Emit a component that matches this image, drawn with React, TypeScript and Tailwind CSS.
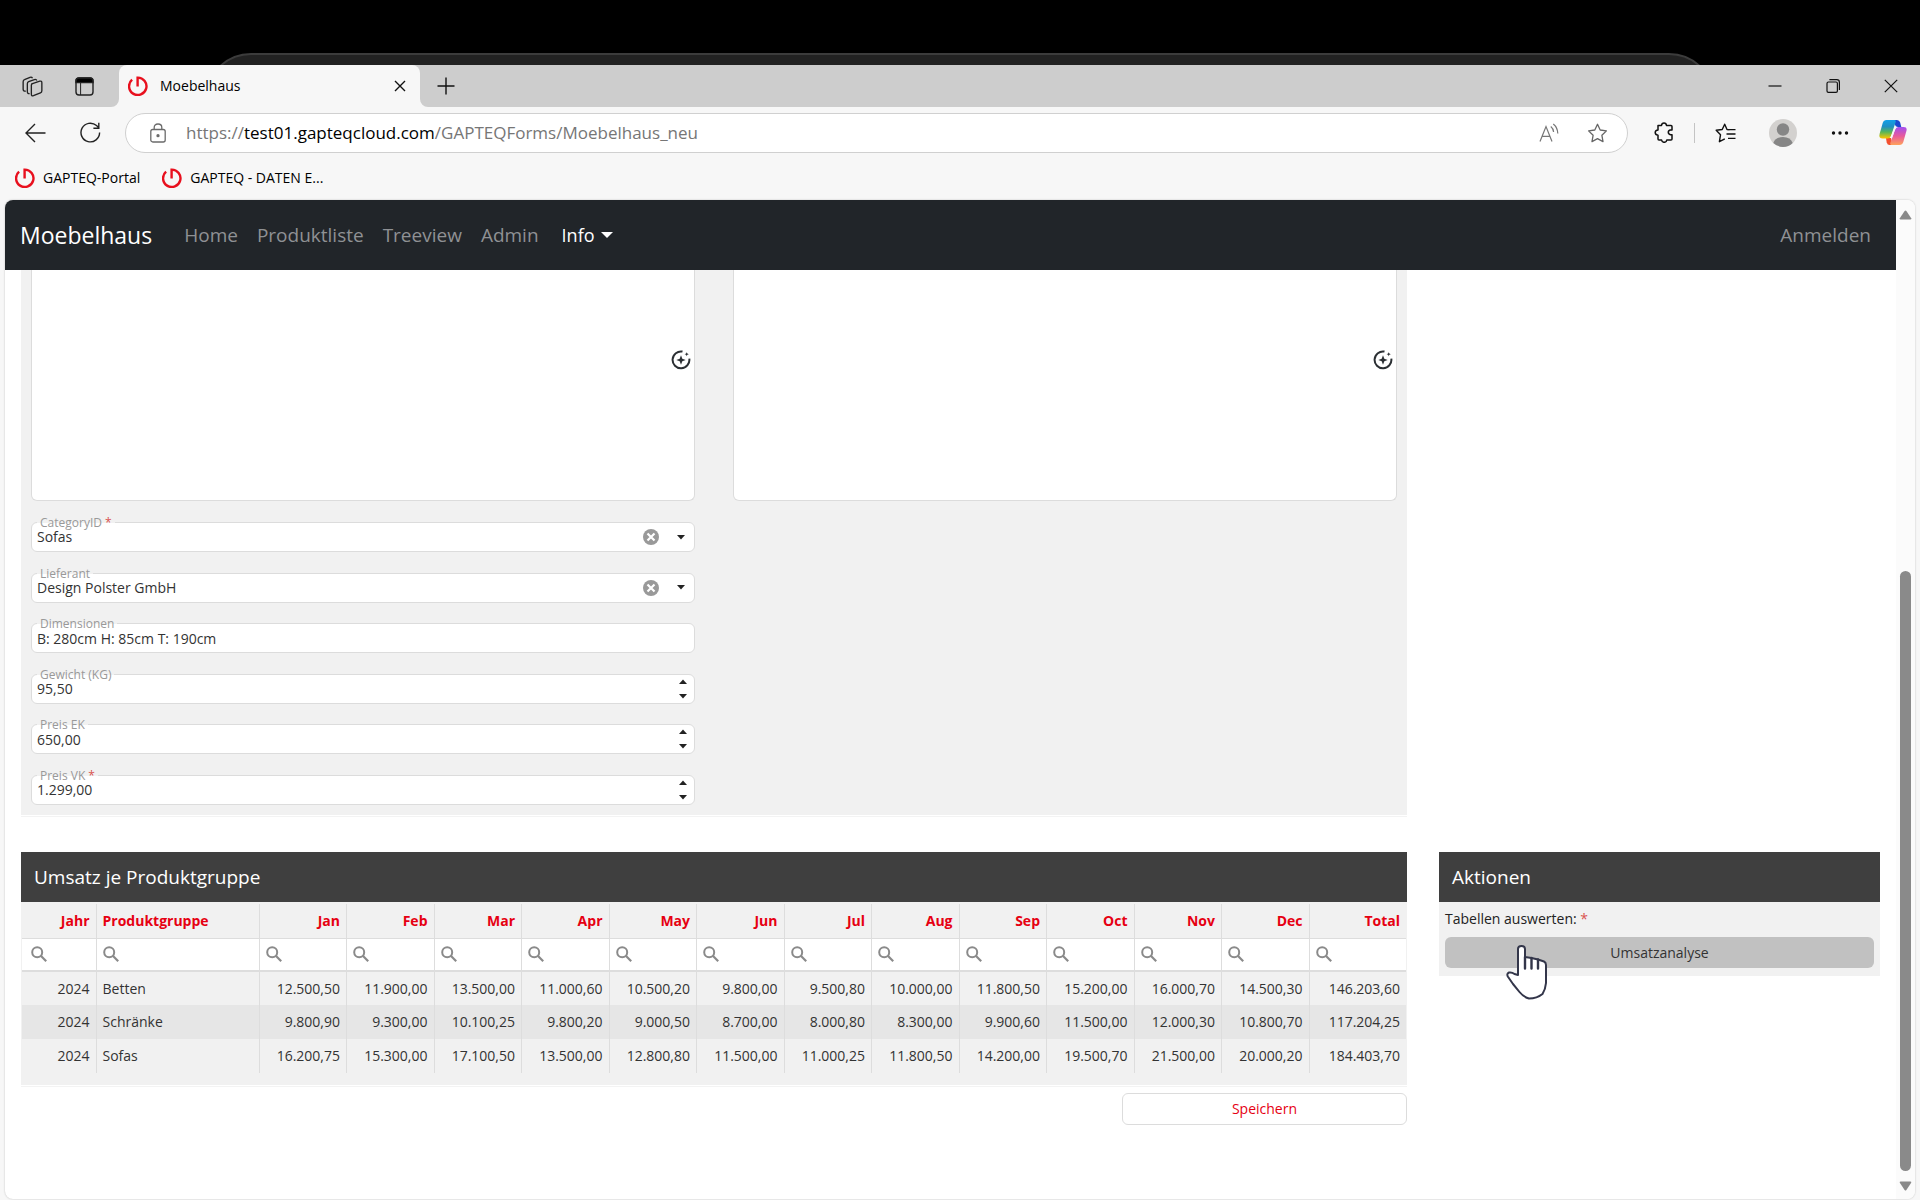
import { useState } from "react";
import type { ReactNode } from "react";

const months = [
  "Jan",
  "Feb",
  "Mar",
  "Apr",
  "May",
  "Jun",
  "Jul",
  "Aug",
  "Sep",
  "Oct",
  "Nov",
  "Dec",
];

const columns = ["Jahr", "Produktgruppe", ...months, "Total"];

const sales = [
  ["2024", "Betten", "12.500,50", "11.900,00", "13.500,00", "11.000,60", "10.500,20", "9.800,00", "9.500,80", "10.000,00", "11.800,50", "15.200,00", "16.000,70", "14.500,30", "146.203,60"],
  ["2024", "Schränke", "9.800,90", "9.300,00", "10.100,25", "9.800,20", "9.000,50", "8.700,00", "8.000,80", "8.300,00", "9.900,60", "11.500,00", "12.000,30", "10.800,70", "117.204,25"],
  ["2024", "Sofas", "16.200,75", "15.300,00", "17.100,50", "13.500,00", "12.800,80", "11.500,00", "11.000,25", "11.800,50", "14.200,00", "19.500,70", "21.500,00", "20.000,20", "184.403,70"],
];

function GapteqLogo() {
  return (
    <svg width="20" height="20" viewBox="0 0 20 20" fill="none" stroke="#e8101e" strokeWidth="2.4" aria-hidden="true">
      <path d="M9.6 10.5V1.6A8.7 8.7 0 1 1 4.1 3.7" />
    </svg>
  );
}

function TabFlare({ flip = false }: { flip?: boolean }) {
  return (
    <svg width="8" height="8" viewBox="0 0 8 8" fill="#f7f7f7" aria-hidden="true">
      <path d={flip ? "M0 0A8 8 0 0 0 8 8H0Z" : "M8 0A8 8 0 0 1 0 8H8Z"} />
    </svg>
  );
}

function TabStrip() {
  return (
    <div className="flex h-[42px] items-stretch bg-[#cdcdcd]">
      <div className="flex w-[111px] items-center gap-8 pl-[22px]">
        <button aria-label="Arbeitsbereiche">
          <svg width="21" height="21" viewBox="0 0 22 22" fill="none" stroke="#222" strokeWidth="1.4" strokeLinejoin="round" aria-hidden="true">
            <path d="M10.2 8.2 18.6 5.4Q20.8 4.9 20.8 7V15.4Q20.8 17 19.3 17.6L12 20.6Q9.8 21.3 9.8 19.2V9.6Q9.8 8.5 10.9 8Z" />
            <path d="M8 18.4Q5.8 18.8 5.6 16.8V8.2Q5.6 6.6 7 6L13 3.7Q15 3.2 15.6 4.8" />
            <path d="M4 15.8Q1.4 16.2 1.2 14V6Q1.2 4.4 2.6 3.9L8.4 1.4Q10.2.8 11 2.4" />
          </svg>
        </button>
        <button aria-label="Tabaktionen">
          <svg width="19" height="19" viewBox="0 0 19 19" fill="none" stroke="#222" strokeWidth="1.4" aria-hidden="true">
            <rect x="1" y="1" width="17" height="17" rx="3" />
            <path d="M1 4Q1 1 4 1H15Q18 1 18 4V5.6H1Z" fill="#000" />
            <path d="M5.6 5.6V18" strokeWidth="1" />
          </svg>
        </button>
      </div>
      <div className="flex items-end">
        <TabFlare />
        <div className="flex h-full w-[301px] items-center rounded-t-lg bg-[#f7f7f7] pl-[9px] pr-[14px]">
          <GapteqLogo />
          <span className="ml-3 flex-1 text-sm">Moebelhaus</span>
          <button aria-label="Tab schließen">
            <svg width="12" height="12" viewBox="0 0 12 12" stroke="#111" strokeWidth="1.4" aria-hidden="true">
              <path d="M1 1 11 11M11 1 1 11" />
            </svg>
          </button>
        </div>
        <TabFlare flip />
      </div>
      <button aria-label="Neuer Tab" className="ml-[9px]">
        <svg width="18" height="18" viewBox="0 0 18 18" stroke="#111" strokeWidth="1.4" aria-hidden="true">
          <path d="M9 .5V17.5M.5 9H17.5" />
        </svg>
      </button>
      <div className="ml-auto flex items-center gap-11 pr-[22px]">
        <button aria-label="Minimieren">
          <svg width="14" height="14" viewBox="0 0 14 14" stroke="#111" strokeWidth="1.2" aria-hidden="true">
            <path d="M.5 7H13.5" />
          </svg>
        </button>
        <button aria-label="Verkleinern">
          <svg width="14" height="14" viewBox="0 0 14 14" fill="none" stroke="#111" strokeWidth="1.2" aria-hidden="true">
            <rect x="1" y="3" width="10.4" height="10.4" rx="1.4" />
            <path d="M3.4.7H10.8Q13.4.7 13.4 3.4V11" />
          </svg>
        </button>
        <button aria-label="Schließen">
          <svg width="14" height="14" viewBox="0 0 14 14" stroke="#111" strokeWidth="1.2" aria-hidden="true">
            <path d="M.8.8 13.2 13.2M13.2.8.8 13.2" />
          </svg>
        </button>
      </div>
    </div>
  );
}

function CopilotIcon() {
  return (
    <svg width="28" height="27" viewBox="0 0 28 27" aria-hidden="true">
      <defs>
        <linearGradient id="cpLeft" x1="0" y1="0" x2="0" y2="1">
          <stop offset="0" stopColor="#12a0e8" />
          <stop offset=".35" stopColor="#1f8fc4" />
          <stop offset=".65" stopColor="#57b659" />
          <stop offset="1" stopColor="#ffc600" />
        </linearGradient>
        <linearGradient id="cpRight" x1="0" y1="0" x2="0" y2="1">
          <stop offset="0" stopColor="#a24ff0" />
          <stop offset=".5" stopColor="#e85a9c" />
          <stop offset="1" stopColor="#ffa25a" />
        </linearGradient>
      </defs>
      <path d="M14 1H18Q20.400 1 21.200 3.500L22.300 8H19Q16.500 8 15.700 5Z" fill="#1b49cf" />
      <path d="M7 19H12L13.500 26H10.500Q8.400 26 7.700 23.500Z" fill="#f4502e" />
      <path d="M7.500 1H15.500Q17.300 1 16.500 3.600L12 17Q11.100 19.500 8.500 19.500H3.500Q-.5 19.500.6 15L3.700 4Q4.600 1 7.500 1Z" fill="url(#cpLeft)" />
      <path d="M20.500 26H12.500Q10.700 26 11.500 23.400L16 10.500Q16.900 8 19.500 8H24.500Q28.500 8 27.400 12L24.300 23Q23.400 26 20.500 26Z" fill="url(#cpRight)" />
      <path d="M15.600 8.600H18Q16.700 9 16 11L13.200 18.700H10.800Q11.800 18 12.300 16.400Z" fill="#f7f7f7" />
    </svg>
  );
}

const starPath = "M10.500 1.300 13.200 7 19.400 7.900 14.900 12.300 16 18.600 10.500 15.600 5 18.600 6.100 12.300 1.600 7.900 7.800 7Z";

function AddressRow() {
  return (
    <div className="flex h-[51px] items-center">
      <div className="flex w-[125px] items-center gap-[34px] pl-[25px]">
        <button aria-label="Zurück">
          <svg width="21" height="20" viewBox="0 0 21 20" fill="none" stroke="#222" strokeWidth="1.4" aria-hidden="true">
            <path d="M20.500 10H1M10 1 1 10 10 19" />
          </svg>
        </button>
        <button aria-label="Aktualisieren">
          <svg width="21" height="21" viewBox="0 0 21 21" fill="none" stroke="#222" strokeWidth="1.4" aria-hidden="true">
            <path d="M19.600 10.500A9.300 9.300 0 1 1 16.500 3.600L18.600 5.600M18.800.8V6.200H13.400" />
          </svg>
        </button>
      </div>
      <div className="flex h-10 flex-1 items-center rounded-full border border-[#d0d0d0] bg-white pl-6 pr-[19px]">
        <svg width="16" height="20" viewBox="0 0 16 20" fill="none" stroke="#6b6b6b" strokeWidth="1.300" aria-hidden="true">
          <rect x=".8" y="6.500" width="14.400" height="12.500" rx="2" />
          <path d="M4.200 6.500V4.500Q4.200 1 8 1T11.800 4.500V6.500" />
          <circle cx="8" cy="12.700" r="1" fill="#555" />
        </svg>
        <a href="#" className="ml-5 flex-1 text-[17px] text-[#767676]">
          https://<span className="text-black">test01.gapteqcloud.com</span>
          /GAPTEQForms/Moebelhaus_neu
        </a>
        <button aria-label="Laut vorlesen">
          <svg width="20" height="20" viewBox="0 0 20 20" fill="none" stroke="#777" strokeWidth="1.200" aria-hidden="true">
            <path d="M1 18.500 7 3.500 13 18.500M3 13.300H11M11.800 3.500Q14.300 5.500 14.600 9M14.300 1Q18.600 4.500 18.800 10.500" />
          </svg>
        </button>
        <button aria-label="Favorit hinzufügen" className="ml-7">
          <svg width="21" height="20" viewBox="0 0 21 20" fill="none" stroke="#666" strokeWidth="1.300" strokeLinejoin="round" aria-hidden="true">
            <path d={starPath} />
          </svg>
        </button>
      </div>
      <div className="flex items-center pl-[26px] pr-[13px]">
        <button aria-label="Erweiterungen">
          <svg width="20" height="21" viewBox="0 0 20 21" fill="none" stroke="#111" strokeWidth="1.500" strokeLinejoin="round" aria-hidden="true">
            <path d="M4 3.500H7.500Q7.800 1 10 1T12.500 3.500H17Q18 3.500 18 4.500V8H16.500Q14.300 8.300 14.300 10.300T16.500 12.700H18V17Q18 18 17 18H12.800Q12.500 20.300 10.200 20.300T7.600 18H5Q4 18 4 17V13.200Q1.200 13 1.200 10.600T4 8Z" />
          </svg>
        </button>
        <span className="ml-5 h-5 w-px bg-[#c4c4c4]" />
        <button aria-label="Favoriten" className="ml-5">
          <svg width="21" height="20" viewBox="0 0 21 20" fill="none" stroke="#111" strokeWidth="1.400" strokeLinejoin="round" aria-hidden="true">
            <path d="M14.500 6.800 12 6.500 9.700 1.200 7.200 6.500 1.200 7.300 5.500 11.800 4.400 18.700 9.800 15.800M12.500 6.600H20.500M11.500 11H20.500M13 15.400H20.500" />
          </svg>
        </button>
        <button aria-label="Profil" className="ml-[33px]">
          <svg width="28" height="28" viewBox="0 0 28 28" aria-hidden="true">
            <circle cx="14" cy="14" r="14" fill="#d3d1cf" />
            <circle cx="14" cy="10.500" r="6.200" fill="#868686" />
            <path d="M4.300 24Q6.500 18 14 18T23.700 24A14 14 0 0 1 4.300 24Z" fill="#868686" />
          </svg>
        </button>
        <button aria-label="Einstellungen und mehr" className="ml-[34px]">
          <svg width="18" height="18" viewBox="0 0 18 18" fill="#111" aria-hidden="true">
            <circle cx="2.500" cy="9" r="1.700" />
            <circle cx="9" cy="9" r="1.700" />
            <circle cx="15.500" cy="9" r="1.700" />
          </svg>
        </button>
        <button aria-label="Copilot" className="ml-[30px]">
          <CopilotIcon />
        </button>
      </div>
    </div>
  );
}

function BookmarkBar() {
  return (
    <div className="flex h-[42px] items-center gap-[22px] pl-[15px] pb-[3px] text-sm">
      <a href="#" className="flex items-center gap-2">
        <GapteqLogo />
        GAPTEQ-Portal
      </a>
      <a href="#" className="flex items-center gap-2">
        <GapteqLogo />
        GAPTEQ - DATEN E...
      </a>
    </div>
  );
}

function Navbar() {
  return (
    <nav className="flex h-[70px] items-center bg-[#212529] pl-[15px] pr-[25px] text-[19px] text-[#8f9194]">
      <a href="#" className="text-[23px] text-white">
        Moebelhaus
      </a>
      <div className="ml-8 flex items-center gap-[19px]">
        <a href="#">Home</a>
        <a href="#">Produktliste</a>
        <a href="#">Treeview</a>
        <a href="#">Admin</a>
        <button className="ml-1 flex items-center gap-[6px] text-lg text-white">
          Info
          <svg width="12" height="6" viewBox="0 0 12 6" fill="#fff" aria-hidden="true">
            <path d="M0 0H12L6 6Z" />
          </svg>
        </button>
      </div>
      <a href="#" className="ml-auto">
        Anmelden
      </a>
    </nav>
  );
}

function MemoBox({ label }: { label: string }) {
  return (
    <div className="relative">
      <textarea
        aria-label={label}
        className="block h-[231px] w-full resize-none rounded-b-md border border-t-0 border-[#dcdcdc] bg-white p-2 outline-none"
      />
      <button aria-label="KI-Assistent" className="absolute right-1 top-20">
        <svg width="20" height="20" viewBox="0 0 20 20" fill="none" stroke="#2b2f33" strokeWidth="2" aria-hidden="true">
          <path d="M11.500 1.600A8.400 8.400 0 1 0 18.300 8.600" />
          <path d="M10 5.300 11.300 8.700 14.700 10 11.300 11.300 10 14.700 8.700 11.300 5.300 10 8.700 8.700ZM15.700 2.200 16.300 3.600 17.800 4.200 16.300 4.800 15.700 6.200 15.100 4.800 13.600 4.200 15.100 3.600Z" fill="#2b2f33" stroke="none" />
        </svg>
      </button>
    </div>
  );
}

interface FieldProps {
  id: string;
  label: string;
  required?: boolean;
  children: ReactNode;
}

function Field({ id, label, required, children }: FieldProps) {
  return (
    <div className="relative flex h-[30px] items-center rounded-md border border-[#dcdcdc] bg-white">
      <label
        htmlFor={id}
        className="absolute -top-2 left-[5px] bg-linear-to-b from-[#f1f1f1] from-50% to-white to-50% px-[3px] text-xs leading-4 text-[#999]"
      >
        {label}
        {required && <span className="text-[#d9534f]"> *</span>}
      </label>
      {children}
    </div>
  );
}

const controlClass =
  "h-full min-w-0 flex-1 appearance-none bg-transparent px-[5px] text-sm text-[#333] outline-none";

function SelectField({ id, label, value, required }: { id: string; label: string; value: string; required?: boolean }) {
  return (
    <Field id={id} label={label} required={required}>
      <select id={id} className={controlClass}>
        <option>{value}</option>
      </select>
      <button aria-label={`${label} leeren`}>
        <svg width="16" height="16" viewBox="0 0 16 16" aria-hidden="true">
          <circle cx="8" cy="8" r="8" fill="#999" />
          <path d="M4.500 4.500 11.500 11.500M11.500 4.500 4.500 11.500" stroke="#fff" strokeWidth="2.200" />
        </svg>
      </button>
      <svg className="ml-[18px] mr-[9px]" width="8" height="5" viewBox="0 0 8 5" fill="#222" aria-hidden="true">
        <path d="M0 0H8L4 4.500Z" />
      </svg>
    </Field>
  );
}

function NumberField({ id, label, value, required }: { id: string; label: string; value: string; required?: boolean }) {
  return (
    <Field id={id} label={label} required={required}>
      <input id={id} type="text" inputMode="decimal" defaultValue={value} className={controlClass} />
      <div className="flex flex-col gap-[10px] pr-[7px]">
        <button aria-label={`${label} erhöhen`}>
          <svg width="8" height="5" viewBox="0 0 8 5" fill="#222" aria-hidden="true">
            <path d="M0 5H8L4 .5Z" />
          </svg>
        </button>
        <button aria-label={`${label} verringern`}>
          <svg width="8" height="5" viewBox="0 0 8 5" fill="#222" aria-hidden="true">
            <path d="M0 0H8L4 4.500Z" />
          </svg>
        </button>
      </div>
    </Field>
  );
}

function ProductForm() {
  return (
    <form className="grid grid-cols-2 gap-x-[38px] gap-y-[21px] bg-[#f1f1f1] px-[10px] pb-[10px] shadow-[0_1px_0_#fff,0_2px_0_#f3f3f3]">
      <MemoBox label="Kurzbeschreibung" />
      <MemoBox label="Beschreibung" />
      <div className="flex h-[283px] flex-col justify-between">
        <SelectField id="category" label="CategoryID" value="Sofas" required />
        <SelectField id="supplier" label="Lieferant" value="Design Polster GmbH" />
        <Field id="dimensions" label="Dimensionen">
          <input id="dimensions" type="text" defaultValue="B: 280cm H: 85cm T: 190cm" className={controlClass} />
        </Field>
        <NumberField id="weight" label="Gewicht (KG)" value="95,50" />
        <NumberField id="priceEk" label="Preis EK" value="650,00" />
        <NumberField id="priceVk" label="Preis VK" value="1.299,00" required />
      </div>
    </form>
  );
}

function PanelTitle({ children }: { children: ReactNode }) {
  return (
    <h2 className="flex h-[50px] items-center bg-[#3f3f3f] px-[13px] text-[19px] text-white">
      {children}
    </h2>
  );
}

function SalesTable() {
  const [filters, setFilters] = useState<Record<string, string>>({});

  const visibleRows = sales.filter((row) =>
    columns.every((name, i) =>
      row[i].toLowerCase().includes((filters[name] ?? "").toLowerCase())
    )
  );

  return (
    <table className="w-full table-fixed border-collapse text-sm text-[#333]">
      <colgroup>
        <col className="w-[74px]" />
        <col className="w-[163px]" />
        {months.map((m) => (
          <col key={m} />
        ))}
        <col className="w-[97px]" />
      </colgroup>
      <thead>
        <tr className="h-[34px] border-b border-[#ddd]">
          {columns.map((name) => (
            <th
              key={name}
              className={`border-r border-[#ddd] px-[6px] font-bold text-[#e60012] last:border-r-0 ${
                name === "Produktgruppe" ? "text-left" : "text-right"
              }`}
            >
              {name}
            </th>
          ))}
        </tr>
        <tr className="h-[33px] border-b-2 border-[#ddd] bg-white">
          {columns.map((name) => (
            <td key={name} className="border-r border-[#ddd] px-[6px] last:border-r-0 first:pl-[9px]">
              <label className="flex items-center">
                <svg width="16" height="16" viewBox="0 0 16 16" fill="none" stroke="#8a8a8a" strokeWidth="2" className="shrink-0" aria-hidden="true">
                  <circle cx="6.200" cy="6.200" r="5" />
                  <path d="M9.800 9.800 15.200 15.200" strokeWidth="2.200" />
                </svg>
                <input
                  type="text"
                  aria-label={`${name} filtern`}
                  value={filters[name] ?? ""}
                  onChange={(e) => setFilters({ ...filters, [name]: e.target.value })}
                  className="w-full min-w-0 bg-transparent pl-1 outline-none"
                />
              </label>
            </td>
          ))}
        </tr>
      </thead>
      <tbody>
        {visibleRows.map((row) => (
          <tr key={row[1]} className="h-[34px] even:bg-[#e6e6e6]">
            {row.map((cell, i) => (
              <td
                key={columns[i]}
                className={`border-r border-[#ddd] px-[6px] last:border-r-0 ${
                  i === 1 ? "text-left" : "text-right"
                }`}
              >
                {cell}
              </td>
            ))}
          </tr>
        ))}
      </tbody>
    </table>
  );
}

function HandCursor() {
  return (
    <svg className="pointer-events-none absolute left-[61px] top-2 z-10" width="42" height="55" viewBox="0 0 42 55" fill="none" stroke="#33364a" strokeWidth="2" strokeLinejoin="round" strokeLinecap="round" aria-hidden="true">
      <path d="M12 30V4Q12 1 15.500 1T19 4V12L25.500 13 32 14.500 38 16.500Q40 17.500 40 20V38Q39.500 44 36.500 49Q31 53.500 23 53.500Q17.500 52 13.500 47L7 39 1.800 31.500Q.5 28.500 3 27.500Q6 27 8.500 29L12 30" fill="#fff" />
      <path d="M19 12V23.500M25.500 13V23.500M32 14.500V23.500" strokeWidth="2.400" />
    </svg>
  );
}

function Scrollbar() {
  return (
    <div className="flex w-[19px] flex-col items-center bg-[#fbfbfb] pb-2 pt-[10px]">
      <svg width="13" height="10" viewBox="0 0 13 10" fill="#8a8a8a" aria-hidden="true">
        <path d="M.8 8.300 5.600 1Q6.500 0 7.400 1L12.200 8.300Q12.500 9.600 11.400 9.600H1.600Q.5 9.600.8 8.300Z" />
      </svg>
      <div className="flex-[351]" />
      <div className="w-[11px] flex-[600] rounded-full bg-[#8a8a8a]" />
      <svg className="mt-[10px]" width="13" height="10" viewBox="0 0 13 10" fill="#8a8a8a" aria-hidden="true">
        <path d="M.8 1.700 5.600 9Q6.500 10 7.400 9L12.200 1.700Q12.500.4 11.400.4H1.600Q.5.4.8 1.700Z" />
      </svg>
    </div>
  );
}

export default function App() {
  return (
    <div className="flex min-h-screen flex-col bg-[#f7f7f7] font-['Open_Sans','Noto_Sans',sans-serif] text-black">
      {/* bezel of the device behind the browser window */}
      <div className="h-[65px] overflow-hidden bg-black px-[205px] pt-[53px]">
        <div className="h-24 rounded-t-[46px] border-2 border-[#3c3c3c] bg-[#222]" />
      </div>

      <header>
        <TabStrip />
        <AddressRow />
        <BookmarkBar />
      </header>

      <div className="mx-[5px] mb-px flex flex-1 overflow-hidden rounded-lg bg-white shadow-[0_0_2px_#bbb]">
        <div className="flex min-w-0 flex-1 flex-col">
          <Navbar />
          <main className="grid grid-cols-[1386fr_441fr] gap-x-8 px-4">
            <ProductForm />
            <section className="col-start-1 mt-[37px]">
              <div className="bg-[#f1f1f1] pb-3 shadow-[0_1px_0_#fff,0_2px_0_#f3f3f3]">
                <PanelTitle>Umsatz je Produktgruppe</PanelTitle>
                <div className="px-px pt-[2px]">
                  <SalesTable />
                </div>
              </div>
              <div className="mt-2 flex justify-end">
                <button className="h-8 w-[285px] rounded-md border border-[#dcdcdc] bg-white text-sm text-[#e60012]">
                  Speichern
                </button>
              </div>
            </section>
            <aside className="mt-[37px]">
              <PanelTitle>Aktionen</PanelTitle>
              <div className="bg-[#f1f1f1] px-[6px] pb-2 pt-[7px]">
                <label htmlFor="analyse" className="block h-7 text-sm leading-5 text-[#222]">
                  Tabellen auswerten: <span className="text-[#d9534f]">*</span>
                </label>
                <div className="relative">
                  <button id="analyse" className="block h-[31px] w-full rounded-md bg-[#c1c1c1] text-sm text-[#333]">
                    Umsatzanalyse
                  </button>
                  <HandCursor />
                </div>
              </div>
            </aside>
          </main>
        </div>
        <Scrollbar />
      </div>
    </div>
  );
}
